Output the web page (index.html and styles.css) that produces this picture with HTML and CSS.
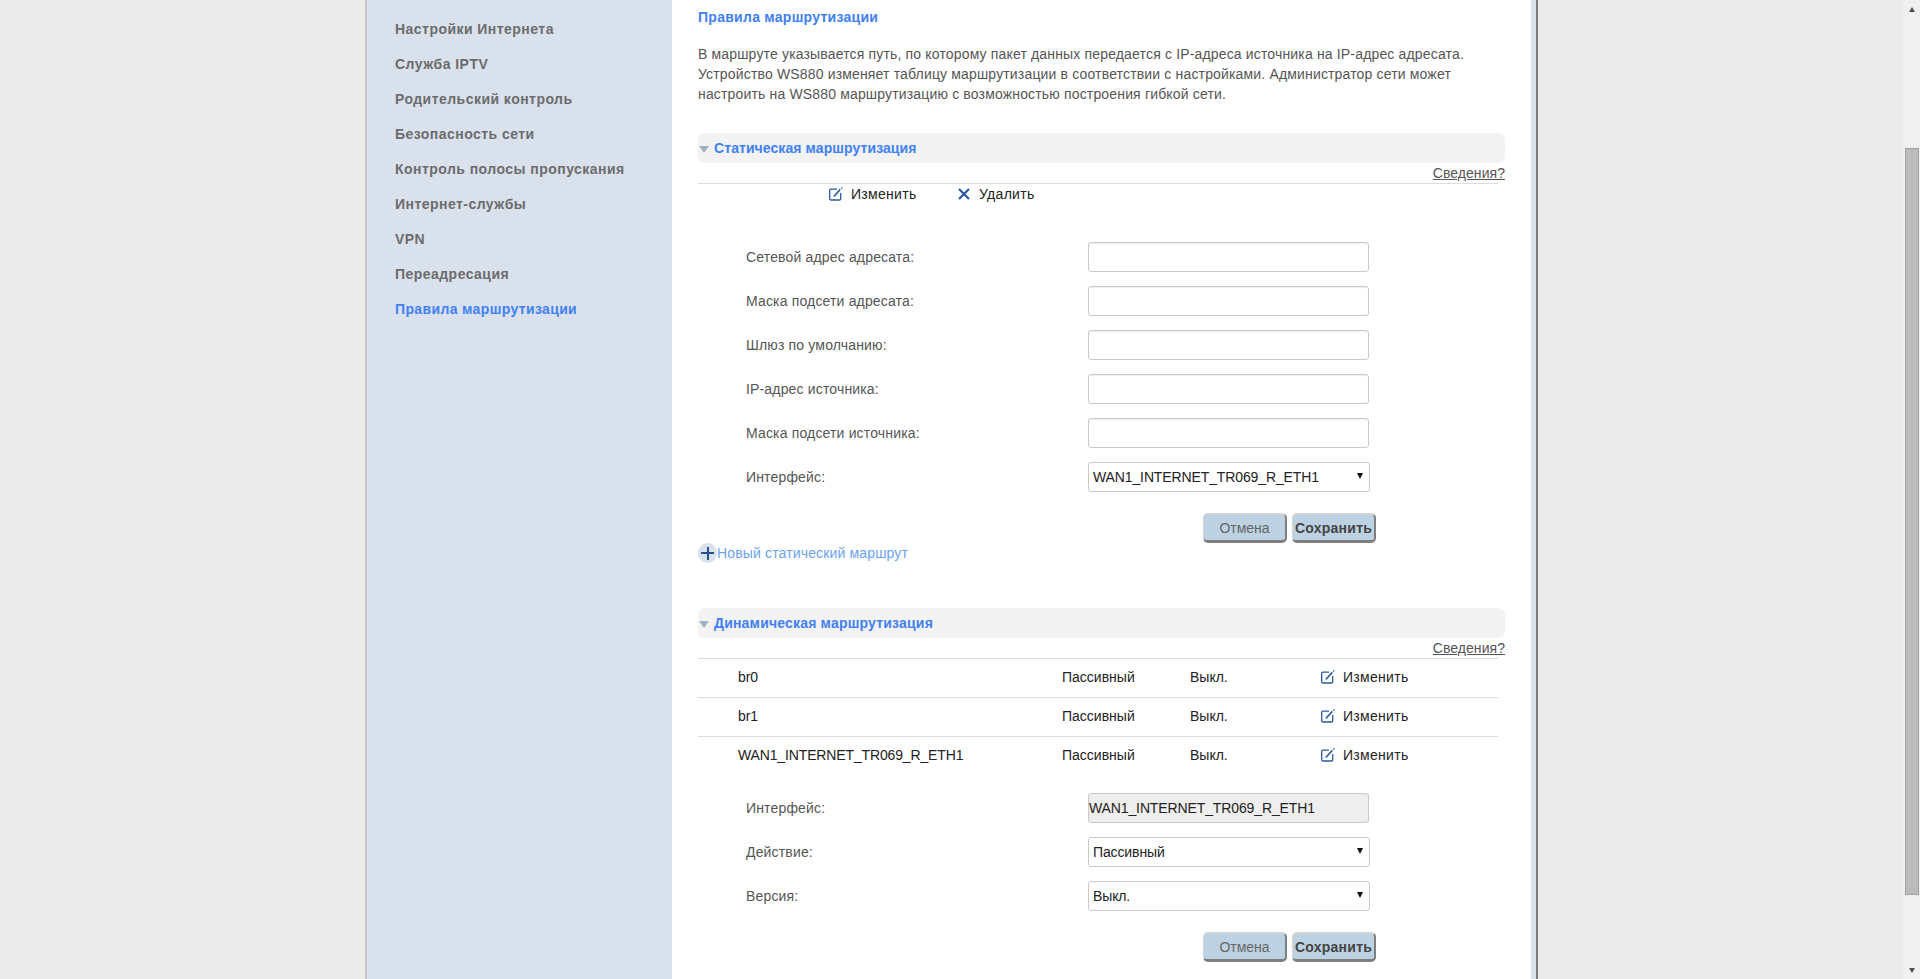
FILE: index.html
```html
<!DOCTYPE html>
<html lang="ru">
<head>
<meta charset="utf-8">
<title>Правила маршрутизации</title>
<link rel="stylesheet" href="styles.css">
</head>
<body>
<div class="page">
  <div class="frame">
    <nav class="sidebar">
      <a class="nav-item">Настройки Интернета</a>
      <a class="nav-item">Служба IPTV</a>
      <a class="nav-item">Родительский контроль</a>
      <a class="nav-item">Безопасность сети</a>
      <a class="nav-item">Контроль полосы пропускания</a>
      <a class="nav-item">Интернет-службы</a>
      <a class="nav-item">VPN</a>
      <a class="nav-item">Переадресация</a>
      <a class="nav-item active">Правила маршрутизации</a>
    </nav>
    <main class="content">
      <h1 class="title">Правила маршрутизации</h1>
      <p class="intro">В маршруте указывается путь, по которому пакет данных передается с IP-адреса источника на IP-адрес адресата. Устройство WS880 изменяет таблицу маршрутизации в соответствии с настройками. Администратор сети может настроить на WS880 маршрутизацию с возможностью построения гибкой сети.</p>

      <h2 class="band"><span class="tri"></span>Статическая маршрутизация</h2>
      <div class="help"><a class="help-link">Сведения?</a></div>
      <div class="actions">
        <span class="act act-edit"><svg class="ico" viewBox="0 0 14 14"><path class="pen-box" d="M8 2.200H2a1.300 1.300 0 0 0-1.300 1.300v8.200A1.300 1.300 0 0 0 2 13h8.400a1.300 1.300 0 0 0 1.300-1.300V6"/><path class="pen-line" d="M4.800 9.500 11.300 2.400"/><path class="pen-tip" d="M12.300 1.500 13.300 .5"/></svg>Изменить</span>
        <span class="act act-del"><svg class="ico" viewBox="0 0 14 14"><path class="cross" d="M2 2 12 12M12 2 2 12"/></svg>Удалить</span>
      </div>
      <form class="form form-static">
        <label class="field-label">Сетевой адрес адресата:</label><input class="field" type="text">
        <label class="field-label">Маска подсети адресата:</label><input class="field" type="text">
        <label class="field-label">Шлюз по умолчанию:</label><input class="field" type="text">
        <label class="field-label">IP-адрес источника:</label><input class="field" type="text">
        <label class="field-label">Маска подсети источника:</label><input class="field" type="text">
        <label class="field-label">Интерфейс:</label>
        <div class="select-wrap"><select class="select"><option>WAN1_INTERNET_TR069_R_ETH1</option></select></div>
      </form>
      <div class="buttons">
        <button class="btn" type="button">Отмена</button>
        <button class="btn btn-save" type="button">Сохранить</button>
      </div>
      <a class="new-route"><span class="plus"></span>Новый статический маршрут</a>

      <h2 class="band band-dynamic"><span class="tri"></span>Динамическая маршрутизация</h2>
      <div class="help"><a class="help-link">Сведения?</a></div>
      <div class="table">
        <div class="row">
          <span class="cell cell-name">br0</span><span class="cell">Пассивный</span><span class="cell">Выкл.</span>
          <span class="act"><svg class="ico" viewBox="0 0 14 14"><path class="pen-box" d="M8 2.200H2a1.300 1.300 0 0 0-1.300 1.300v8.200A1.300 1.300 0 0 0 2 13h8.400a1.300 1.300 0 0 0 1.300-1.300V6"/><path class="pen-line" d="M4.800 9.500 11.300 2.400"/><path class="pen-tip" d="M12.300 1.500 13.300 .5"/></svg>Изменить</span>
        </div>
        <div class="row">
          <span class="cell cell-name">br1</span><span class="cell">Пассивный</span><span class="cell">Выкл.</span>
          <span class="act"><svg class="ico" viewBox="0 0 14 14"><path class="pen-box" d="M8 2.200H2a1.300 1.300 0 0 0-1.300 1.300v8.200A1.300 1.300 0 0 0 2 13h8.400a1.300 1.300 0 0 0 1.300-1.300V6"/><path class="pen-line" d="M4.800 9.500 11.300 2.400"/><path class="pen-tip" d="M12.300 1.500 13.300 .5"/></svg>Изменить</span>
        </div>
        <div class="row">
          <span class="cell cell-name">WAN1_INTERNET_TR069_R_ETH1</span><span class="cell">Пассивный</span><span class="cell">Выкл.</span>
          <span class="act"><svg class="ico" viewBox="0 0 14 14"><path class="pen-box" d="M8 2.200H2a1.300 1.300 0 0 0-1.300 1.300v8.200A1.300 1.300 0 0 0 2 13h8.400a1.300 1.300 0 0 0 1.300-1.300V6"/><path class="pen-line" d="M4.800 9.500 11.300 2.400"/><path class="pen-tip" d="M12.300 1.500 13.300 .5"/></svg>Изменить</span>
        </div>
      </div>
      <form class="form form-dynamic">
        <label class="field-label">Интерфейс:</label><input class="field field-readonly" type="text" value="WAN1_INTERNET_TR069_R_ETH1" readonly>
        <label class="field-label">Действие:</label>
        <div class="select-wrap"><select class="select"><option>Пассивный</option></select></div>
        <label class="field-label">Версия:</label>
        <div class="select-wrap"><select class="select"><option>Выкл.</option></select></div>
      </form>
      <div class="buttons">
        <button class="btn" type="button">Отмена</button>
        <button class="btn btn-save" type="button">Сохранить</button>
      </div>
    </main>
  </div>
  <div class="scrollbar">
    <div class="scroll-up"></div>
    <div class="scroll-thumb"></div>
    <div class="scroll-down"></div>
  </div>
</div>
</body>
</html>
```

FILE: styles.css
```css
* { box-sizing: border-box; }
html, body { margin: 0; height: 100%; overflow: hidden; }
body { font-family: "Liberation Sans", Arial, sans-serif; font-size: 14px; color: #555; background: #ebebeb; }

.page { display: flex; justify-content: flex-end; height: 979px; }

.frame {
  display: flex;
  width: 1171px;
  margin-right: 367px;
  border-left: 2px solid #c8c8c8;
  border-right: 5px solid #d9e1ec;
  box-shadow: 2px 0 0 #7a7a7a;
  background: #fff;
  flex: none;
}

.sidebar { width: 305px; flex: none; background: #d9e1ec; padding-top: 12px; display: flex; flex-direction: column; }
.nav-item { height: 35px; line-height: 35px; padding-left: 28px; font-weight: bold; color: #6c6c6c; font-size: 14px; letter-spacing: .46px; }
.nav-item.active { color: #3f80f5; letter-spacing: .36px; }

.content { width: 859px; flex: none; padding: 7px 26px 0 26px; }

.title { margin: 0; font-size: 14px; line-height: 20px; font-weight: bold; color: #3f80f5; letter-spacing: .27px; }
.intro { margin: 17px 0 29px; line-height: 20px; width: 807px; letter-spacing: .16px; }

.band { margin: 0; height: 30px; line-height: 30px; background: #f3f3f3; border-radius: 6px; font-size: 14px; font-weight: bold; color: #3f80f5; display: flex; align-items: center; letter-spacing: .08px; }
.band-dynamic { margin-top: 45px; letter-spacing: .19px; }
.tri { width: 0; height: 0; margin: 3px 5px 0 1px; border-left: 5.500px solid transparent; border-right: 5.500px solid transparent; border-top: 7px solid #9fb2bf; }

.help { height: 20px; line-height: 20px; text-align: right; letter-spacing: .05px; }
.help-link { color: #555; text-decoration: underline; }

.actions { width: 800px; height: 21px; border-top: 1px solid #d9dde8; display: flex; align-items: center; padding-left: 131px; }

.act { display: inline-flex; align-items: center; color: #222; letter-spacing: .3px; }
.act-edit { width: 128px; }
.ico { width: 14px; height: 14px; margin-right: 8px; flex: none; }
.pen-box, .pen-line, .pen-tip { fill: none; stroke: #2a5a9c; stroke-width: 1.300; }
.pen-line { stroke-width: 1.600; }
.cross { fill: none; stroke: #2e5aa0; stroke-width: 2.200; }

.form { display: grid; grid-template-columns: 342px 282px; row-gap: 14px; padding-left: 48px; align-items: center; }
.form-static { margin-top: 38px; }
.form-dynamic { margin-top: 18px; }

.field-label { color: #555; letter-spacing: .16px; }
.field { width: 281px; height: 30px; border: 1px solid #c9c9c9; border-radius: 3px; background: #fff; font: 14px "Liberation Sans", Arial, sans-serif; color: #222; padding: 0; box-shadow: inset 0 1px 1px #eee; }
.field-readonly { background: #eee; box-shadow: none; letter-spacing: -.12px; }

.select-wrap { position: relative; width: 282px; height: 30px; }
.select-wrap::after { content: ""; position: absolute; right: 7px; top: 11px; border-left: 3px solid transparent; border-right: 3px solid transparent; border-top: 6px solid #111; pointer-events: none; }
.select { appearance: none; width: 100%; height: 100%; border: 1px solid #c9c9c9; border-radius: 3px; background: #fff; font: 14px "Liberation Sans", Arial, sans-serif; letter-spacing: -.12px; color: #222; padding: 0 4px; }

.buttons { display: flex; gap: 5px; margin-top: 21px; padding-right: 129px; justify-content: flex-end; }
.btn { width: 84px; height: 30px; padding: 0; background: #bcd1e1; border: 1px solid #d4d4d4; border-top-width: 2px; border-right: 2px solid #7f7f7f; border-bottom: 3px solid #7f7f7f; border-radius: 5px; font: 14px "Liberation Sans", Arial, sans-serif; color: #666; }
.btn-save { font-weight: bold; color: #444; letter-spacing: .25px; }

.new-route { display: flex; align-items: center; height: 20px; color: #6ba3ef; letter-spacing: .15px; }
.plus { position: relative; width: 19px; height: 20px; border-radius: 50%; background: #d9e1ec; flex: none; }
.plus::before { content: ""; position: absolute; left: 3px; top: 9px; width: 13px; height: 2px; background: #2a4f8f; }
.plus::after { content: ""; position: absolute; left: 8.500px; top: 3.500px; width: 2px; height: 13px; background: #2a4f8f; }

.table { width: 800px; }
.row { display: grid; grid-template-columns: 324px 128px 131px 1fr; height: 39px; padding: 0 0 3px 40px; border-top: 1px solid #d9dde8; align-items: center; color: #222; }
.cell { color: #222; }
.cell-name { letter-spacing: -.14px; }

.scrollbar { width: 17px; flex: none; background: #f0f0f0; display: flex; flex-direction: column; align-items: center; }
.scroll-up { margin-top: 7px; margin-bottom: 136px; border-left: 3.500px solid transparent; border-right: 3.500px solid transparent; border-bottom: 5px solid #505050; }
.scroll-thumb { width: 14px; height: 747px; background: #bcbcbc; border: 1px solid #a0a0a0; }
.scroll-down { margin-top: 73px; border-left: 3.500px solid transparent; border-right: 3.500px solid transparent; border-top: 5px solid #505050; }
```
